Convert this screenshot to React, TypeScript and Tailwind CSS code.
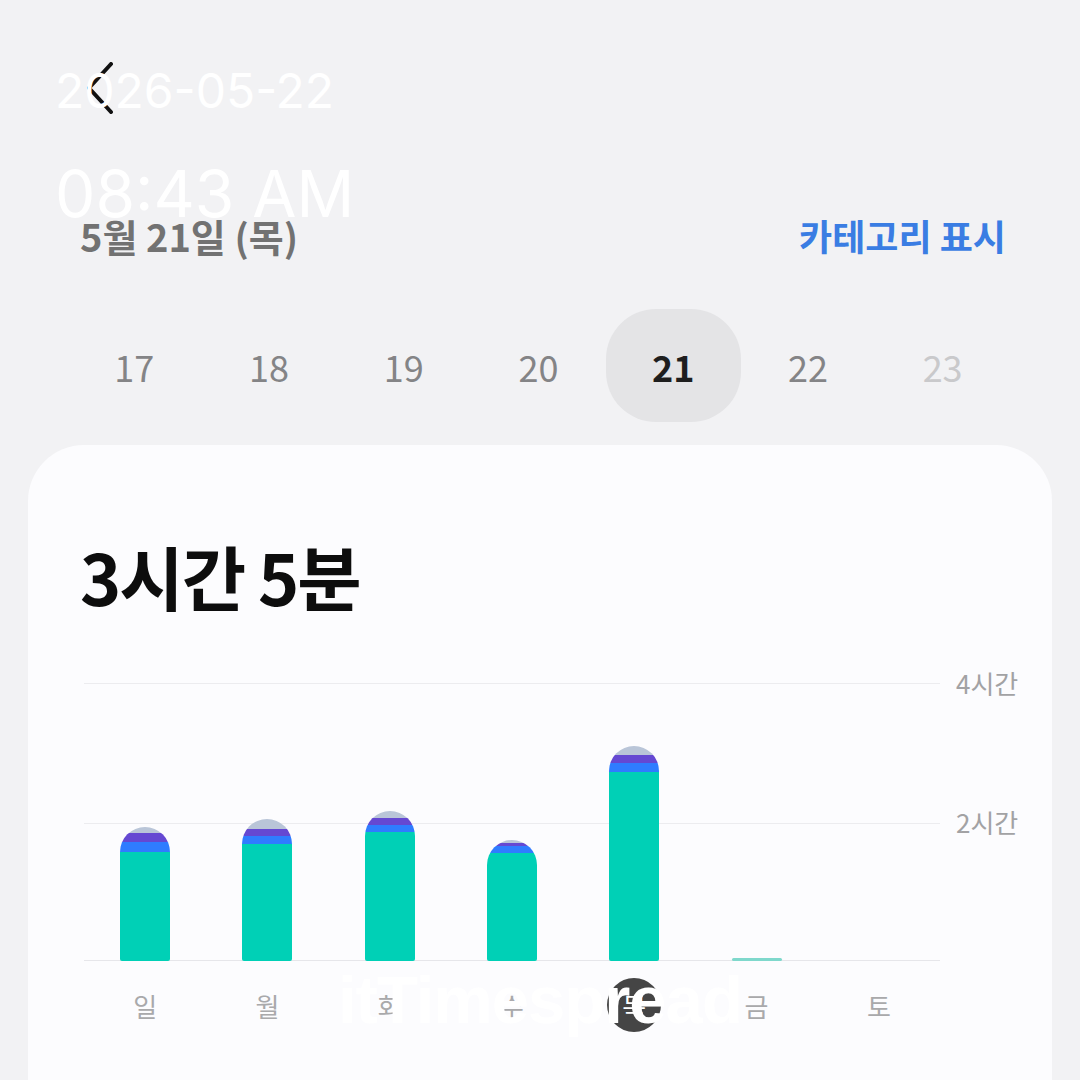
import React from "react";

const days = ["17", "18", "19", "20", "21", "22", "23"];

type Bar = {
  label: string;
  teal: number;
  blue: number;
  purple: number;
  light: number;
};

const bars: Bar[] = [
  { label: "일", teal: 109, blue: 10, purple: 9, light: 6 },
  { label: "월", teal: 117, blue: 8, purple: 7, light: 10 },
  { label: "화", teal: 129, blue: 7, purple: 7, light: 7 },
  { label: "수", teal: 108, blue: 7, purple: 3, light: 3 },
  { label: "목", teal: 189, blue: 9, purple: 8, light: 9 },
  { label: "금", teal: 0, blue: 0, purple: 0, light: 0 },
  { label: "토", teal: 0, blue: 0, purple: 0, light: 0 },
];

const ko = { fontFamily: '"Noto Sans CJK KR", "Noto Sans", sans-serif' };

const App = () => {
  return (
    <div
      className="relative w-[1080px] h-[1080px] overflow-hidden bg-[#f2f2f4]"
      style={ko}
    >
      {/* back */}
      <div className="pt-[62px] pl-[86px] h-[114px]">
        <svg width="28" height="52" viewBox="0 0 28 52" fill="none">
          <path
            d="M25 2 L3 26 L25 50"
            stroke="#111"
            strokeWidth="4"
            strokeLinecap="round"
            strokeLinejoin="round"
          />
        </svg>
      </div>

      {/* date + category */}
      <div className="mt-[96px] h-[50px] flex items-center justify-between pl-[80px] pr-[74px]">
        <span className="text-[38px] font-semibold text-[#727272]">
          5월 21일 (목)
        </span>
        <span className="text-[36px] font-bold text-[#3a7de3]">
          카테고리 표시
        </span>
      </div>

      {/* day strip */}
      <div className="mt-[49px] h-[113px] grid grid-cols-7 pl-[67px] pr-[70px]">
        {days.map((d) => (
          <div
            key={d}
            className={
              d === "21"
                ? "flex items-center justify-center rounded-[50px] bg-[#e4e4e6] text-[36px] font-bold text-[#1e1e1e]"
                : d === "23"
                ? "flex items-center justify-center text-[36px] text-[#c9c9cb]"
                : "flex items-center justify-center text-[36px] text-[#848486]"
            }
          >
            {d}
          </div>
        ))}
      </div>

      {/* card */}
      <div className="mt-[23px] mx-[28px] h-[700px] rounded-[56px] bg-[#fcfcfe] pt-[88px]">
        <div className="pl-[52px] h-[84px] flex items-center text-[70px] font-bold text-[#0d0d0d] tracking-[-2px]">
          3시간 5분
        </div>

        {/* chart */}
        <div className="mt-[66px] flex pl-[56px]">
          <div className="w-[856px]">
            <div className="relative h-[278px] border-t border-[#ececef]">
              <div className="absolute left-0 right-0 top-[139px] h-px bg-[#ececef]" />
              <div className="absolute left-0 right-0 bottom-0 h-px bg-[#e6e6ea]" />
              <div className="relative h-full grid grid-cols-7">
                {bars.map((b, i) => (
                  <div key={i} className="flex items-end justify-center">
                    {b.teal > 0 ? (
                      <div className="w-[50px] flex flex-col rounded-t-[25px] rounded-b-[2px] overflow-hidden">
                        <div className="bg-[#b9c5d8]" style={{ height: b.light }} />
                        <div className="bg-[#6548d2]" style={{ height: b.purple }} />
                        <div className="bg-[#2f7cff]" style={{ height: b.blue }} />
                        <div className="bg-[#00d0b6]" style={{ height: b.teal }} />
                      </div>
                    ) : b.label === "금" ? (
                      <div className="w-[50px] h-[3px] rounded-full bg-[#7fd8cc]" />
                    ) : null}
                  </div>
                ))}
              </div>
            </div>
            <div className="mt-[17px] h-[52px] grid grid-cols-7">
              {bars.map((b) => (
                <div key={b.label} className="flex items-center justify-center">
                  {b.label === "목" ? (
                    <div className="w-[54px] h-[54px] rounded-full bg-[#454545] flex items-center justify-center text-[26px] text-white">
                      {b.label}
                    </div>
                  ) : (
                    <span className="text-[26px] text-[#a9a9ab]">{b.label}</span>
                  )}
                </div>
              ))}
            </div>
          </div>
          <div className="relative ml-[16px] w-[80px]">
            <span className="absolute left-0 top-[-20px] text-[26px] leading-[40px] text-[#a2a2a4]">
              4시간
            </span>
            <span className="absolute left-0 top-[119px] text-[26px] leading-[40px] text-[#a2a2a4]">
              2시간
            </span>
          </div>
        </div>
      </div>

      {/* capture stamp */}
      <div
        className="absolute left-[55px] top-[67px] text-white leading-none"
        style={{ fontFamily: "Inter, Roboto, sans-serif" }}
      >
        <div className="text-[48px]">2026-05-22</div>
        <div className="mt-[47px] text-[64px]">08:43 AM</div>
      </div>
      <div
        className="absolute left-[338px] top-[966px] text-[67px] font-bold text-white leading-none tracking-[-1px]"
        style={{ fontFamily: '"Liberation Sans", Arial, sans-serif' }}
      >
        itTimespread
      </div>
    </div>
  );
};

export default App;
